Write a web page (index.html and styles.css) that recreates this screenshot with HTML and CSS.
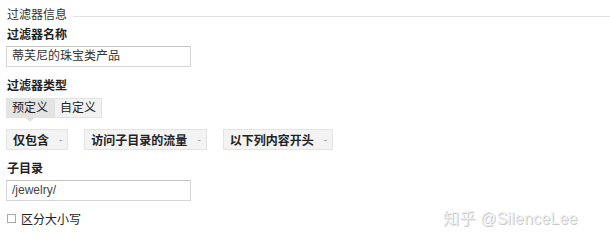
FILE: index.html
```html
<!DOCTYPE html>
<html lang="zh-CN">
<head>
    <meta charset="UTF-8">
    <title>过滤器信息</title>
    <link rel="stylesheet" href="styles.css">
</head>
<body>
    <div class="filter-form">
        <div class="section-title">
            <span>过滤器信息</span>
            <span class="rule"></span>
        </div>

        <div class="field-label">过滤器名称</div>
        <div class="text-box">蒂芙尼的珠宝类产品</div>

        <div class="field-label type-label">过滤器类型</div>
        <div class="tabs">
            <span class="tab active">预定义</span>
            <span class="tab">自定义</span>
        </div>

        <div class="selects">
            <span class="select">仅包含<span class="caret">-</span></span>
            <span class="select">访问子目录的流量<span class="caret">-</span></span>
            <span class="select">以下列内容开头<span class="caret">-</span></span>
        </div>

        <div class="field-label dir-label">子目录</div>
        <div class="text-box path-box">/jewelry/</div>

        <div class="check-row">
            <span class="checkbox"></span>
            <span>区分大小写</span>
        </div>
    </div>

    <div class="watermark">知乎 @SilenceLee</div>
</body>
</html>
```

FILE: styles.css
```css
body {
    margin: 0;
    background: #fff;
    font-family: "Liberation Sans", "Noto Sans CJK SC", sans-serif;
    font-size: 12px;
    color: #222;
    width: 610px;
    height: 244px;
    overflow: hidden;
    position: relative;
}
.filter-form {
    padding: 5px 0 0 6px;
}
.section-title {
    display: flex;
    align-items: center;
    height: 16px;
    color: #333;
}
.section-title span:first-child {
    padding-left: 1px;
}
.rule {
    flex: 1;
    height: 1px;
    background: #e0e0e0;
    margin: 6px 0 0 6px;
}
.field-label {
    font-weight: bold;
    margin: 6px 0 0 1px;
    height: 16px;
    line-height: 16px;
    color: #222;
}
.type-label {
    margin-top: 11px;
}
.dir-label {
    margin-top: 11px;
}
.text-box {
    width: 178px;
    height: 19px;
    line-height: 19px;
    border: 1px solid #d6d6d6;
    border-top-color: #c4c4c4;
    margin-top: 3px;
    padding-left: 5px;
    color: #333;
}
.path-box {
    margin-top: 3px;
    color: #444;
}
.tabs {
    display: flex;
    margin-top: 4px;
}
.tab {
    display: inline-block;
    height: 18px;
    line-height: 18px;
    padding: 0 5px;
    background: #f2f2f2;
    border: 1px solid #e2e2e2;
    color: #222;
}
.tab.active {
    background: #e4e4e4;
    position: relative;
}
.tab.active::after {
    content: "";
    position: absolute;
    left: 19px;
    bottom: -5px;
    border-left: 4px solid transparent;
    border-right: 4px solid transparent;
    border-top: 4px solid #e0e0e0;
}
.selects {
    display: flex;
    gap: 16px;
    margin-top: 11px;
}
.select {
    display: inline-flex;
    align-items: center;
    height: 19px;
    padding: 0 5px 0 6px;
    background: #f3f3f3;
    border: 1px solid #e4e4e4;
    color: #222;
    font-weight: bold;
}
.caret {
    color: #999;
    margin-left: 10px;
    font-size: 10px;
    font-weight: normal;
}
.check-row {
    display: flex;
    align-items: center;
    margin-top: 9px;
    margin-left: 1px;
    color: #222;
}
.checkbox {
    width: 7px;
    height: 7px;
    border: 1px solid #aaa;
    margin-right: 5px;
}
.watermark {
    position: absolute;
    left: 443px;
    top: 205px;
    font-size: 16px;
    color: #f0f0f0;
    text-shadow: 1px 1px 0 #c8c8c8, -1px -1px 0 #fff;
    letter-spacing: 0.2px;
}
```
